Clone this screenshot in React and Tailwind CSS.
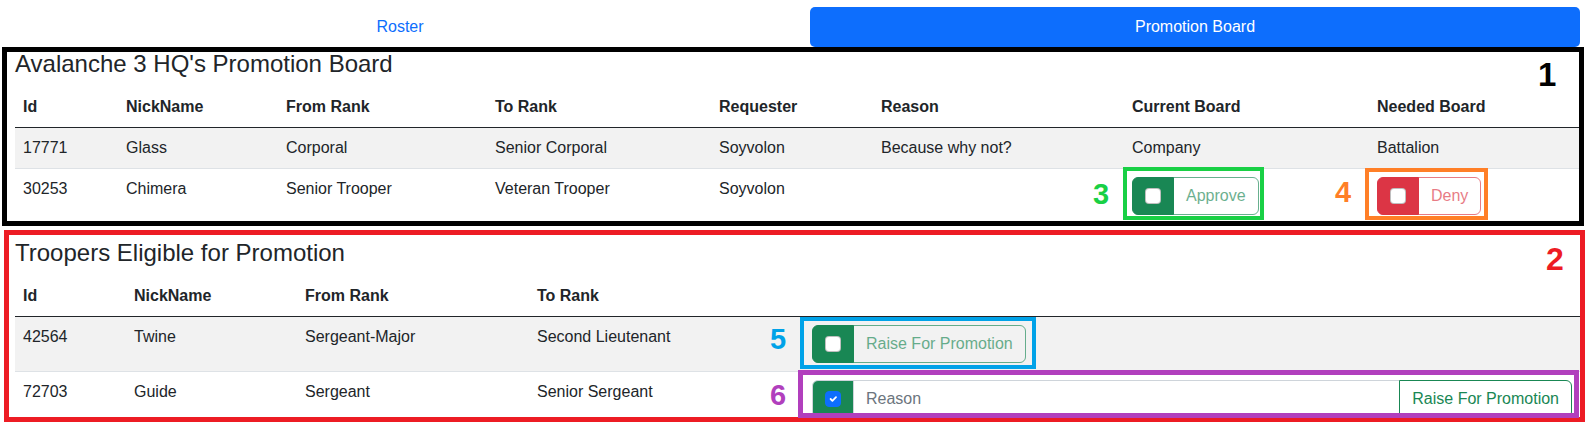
import React from "react";

function Check({ checked }) {
  if (checked) {
    return (
      <span className="w-[16px] h-[16px] rounded-[4px] bg-[#0d6efd] border border-[#0d6efd] flex items-center justify-center">
        <svg width="12" height="12" viewBox="0 0 20 20">
          <path d="M6 10l3 3 6-6" fill="none" stroke="#fff" strokeWidth="3" strokeLinecap="round" strokeLinejoin="round" />
        </svg>
      </span>
    );
  }
  return <span className="w-[16px] h-[16px] rounded-[4px] bg-white border border-black/25 block" />;
}

function ToggleButton({ label, tone }) {
  const green = tone === "green";
  return (
    <div className="inline-flex h-[38px]">
      <div
        className={
          green
            ? "flex items-center px-[12px] bg-[#198754] border border-[#198754] rounded-l-[6px]"
            : "flex items-center px-[12px] bg-[#dc3545] border border-[#dc3545] rounded-l-[6px]"
        }
      >
        <Check />
      </div>
      <div
        className={
          green
            ? "flex items-center px-[12px] border border-[#198754] text-[#198754] rounded-r-[6px] opacity-65 -ml-px"
            : "flex items-center px-[12px] border border-[#dc3545] text-[#dc3545] rounded-r-[6px] opacity-65 -ml-px"
        }
      >
        {label}
      </div>
    </div>
  );
}

const th = "px-[8px] py-[8px] text-left font-bold leading-[24px]";
const td = "px-[8px] py-[8px] align-top leading-[24px]";

export default function App() {
  return (
    <div className="relative w-[1590px] h-[426px] bg-white overflow-hidden font-['Liberation_Sans',Arial,sans-serif] text-[16px] text-[#212529]">
      <nav className="flex pt-[7px] pl-[15px] pr-[10px]">
        <div className="w-[770px] h-[40px] flex items-center justify-center text-[#0d6efd]">Roster</div>
        <div className="ml-[25px] flex-1 h-[40px] rounded-[5px] bg-[#0d6efd] text-white flex items-center justify-center">
          Promotion Board
        </div>
      </nav>

      <section className="pl-[15px] pt-[2px]">
        <h4 className="text-[24px] leading-[30px] mb-[8px] font-normal">Avalanche 3 HQ's Promotion Board</h4>
        <table className="w-[1565px] table-fixed border-collapse mb-[14px]">
          <thead>
            <tr className="border-b border-[#212529]">
              <th className={th + " w-[103px]"}>Id</th>
              <th className={th + " w-[160px]"}>NickName</th>
              <th className={th + " w-[209px]"}>From Rank</th>
              <th className={th + " w-[224px]"}>To Rank</th>
              <th className={th + " w-[162px]"}>Requester</th>
              <th className={th + " w-[251px]"}>Reason</th>
              <th className={th + " w-[245px]"}>Current Board</th>
              <th className={th}>Needed Board</th>
            </tr>
          </thead>
          <tbody>
            <tr className="bg-[#f2f2f2] border-b border-[#dee2e6]">
              <td className={td}>17771</td>
              <td className={td}>Glass</td>
              <td className={td}>Corporal</td>
              <td className={td}>Senior Corporal</td>
              <td className={td}>Soyvolon</td>
              <td className={td}>Because why not?</td>
              <td className={td}>Company</td>
              <td className={td}>Battalion</td>
            </tr>
            <tr className="border-b border-[#dee2e6]">
              <td className={td}>30253</td>
              <td className={td}>Chimera</td>
              <td className={td}>Senior Trooper</td>
              <td className={td}>Veteran Trooper</td>
              <td className={td}>Soyvolon</td>
              <td className={td}></td>
              <td className={td}>
                <ToggleButton label="Approve" tone="green" />
              </td>
              <td className={td}>
                <ToggleButton label="Deny" tone="red" />
              </td>
            </tr>
          </tbody>
        </table>

        <h4 className="text-[24px] leading-[30px] mb-[8px] font-normal">Troopers Eligible for Promotion</h4>
        <table className="w-[1565px] table-fixed border-collapse">
          <thead>
            <tr className="border-b border-[#212529]">
              <th className={th + " w-[111px]"}>Id</th>
              <th className={th + " w-[171px]"}>NickName</th>
              <th className={th + " w-[232px]"}>From Rank</th>
              <th className={th + " w-[275px]"}>To Rank</th>
              <th className={th}></th>
            </tr>
          </thead>
          <tbody>
            <tr className="bg-[#f2f2f2] border-b border-[#dee2e6]">
              <td className={td}>42564</td>
              <td className={td}>Twine</td>
              <td className={td}>Sergeant-Major</td>
              <td className={td}>Second Lieutenant</td>
              <td className={td}>
                <ToggleButton label="Raise For Promotion" tone="green" />
              </td>
            </tr>
            <tr className="border-b border-[#dee2e6]">
              <td className={td}>72703</td>
              <td className={td}>Guide</td>
              <td className={td}>Sergeant</td>
              <td className={td}>Senior Sergeant</td>
              <td className={td}>
                <div className="flex h-[38px] w-full">
                  <div className="flex items-center px-[12px] bg-[#198754] border border-[#ced4da] rounded-l-[6px]">
                    <Check checked />
                  </div>
                  <input
                    className="flex-1 min-w-0 border border-[#ced4da] -ml-px px-[12px] text-[16px] outline-none placeholder:text-[#6c757d] bg-white"
                    placeholder="Reason"
                  />
                  <div className="flex items-center px-[12px] border border-[#198754] text-[#198754] bg-white rounded-r-[6px] -ml-px">
                    Raise For Promotion
                  </div>
                </div>
              </td>
            </tr>
          </tbody>
        </table>
      </section>

      {/* annotation overlays */}
      <div className="absolute left-[2px] top-[47px] w-[1582px] h-[179px] border-[5px] border-black" />
      <div className="absolute left-[4px] top-[230px] w-[1581px] h-[192px] border-[5px] border-[#ed1c24]" />
      <div className="absolute left-[1123px] top-[167px] w-[141px] h-[53px] border-[4px] border-[#19d045]" />
      <div className="absolute left-[1365px] top-[168px] w-[123px] h-[52px] border-[4px] border-[#ff7f27]" />
      <div className="absolute left-[800px] top-[317px] w-[236px] h-[52px] border-[4px] border-[#00a2e8]" />
      <div className="absolute left-[798px] top-[370px] w-[781px] h-[48px] border-[5px] border-[#b13fbd]" />

      <span className="absolute left-[1538px] top-[58px] text-[33px] leading-none font-bold text-black">1</span>
      <span className="absolute left-[1546px] top-[243px] text-[32px] leading-none font-bold text-[#ed1c24]">2</span>
      <span className="absolute left-[1093px] top-[180px] text-[29px] leading-none font-bold text-[#19d045]">3</span>
      <span className="absolute left-[1335px] top-[178px] text-[29px] leading-none font-bold text-[#ff7f27]">4</span>
      <span className="absolute left-[770px] top-[325px] text-[29px] leading-none font-bold text-[#00a2e8]">5</span>
      <span className="absolute left-[770px] top-[381px] text-[29px] leading-none font-bold text-[#b13fbd]">6</span>
    </div>
  );
}
